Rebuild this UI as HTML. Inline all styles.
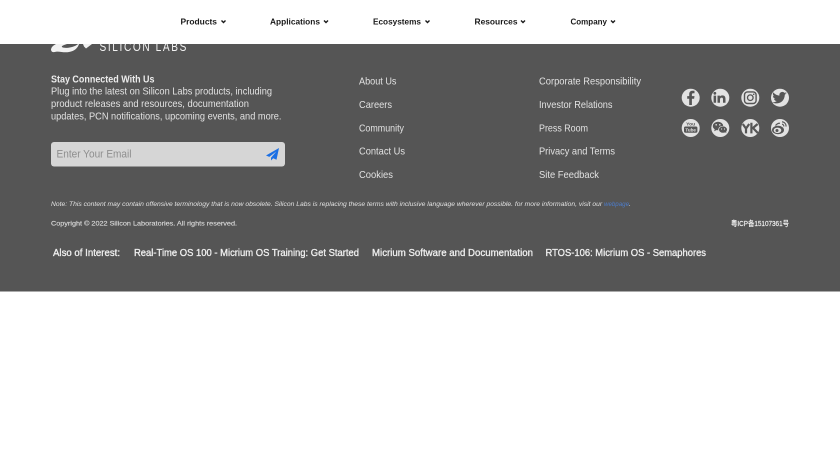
<!DOCTYPE html>
<html lang="en">
<head>
<meta charset="utf-8">
<title>Silicon Labs Footer</title>
<style>
html,body{margin:0;padding:0;background:#fff;width:840px;height:472px;overflow:hidden}
svg{display:block}
text{font-family:"Liberation Sans","Noto Sans CJK SC",sans-serif;white-space:pre}
.nav{font-size:8.300px;font-weight:bold;fill:#1a1a1a}
.body{font-size:10.500px;fill:#e2e2e2}
.link{font-size:10.500px;fill:#e2e2e2}
.also{font-size:10px;fill:#f0f0f0;stroke:#f0f0f0;stroke-width:.3}
.chev{fill:none;stroke:#1a1a1a;stroke-width:1.400}
.ic{fill:#555}
.is{fill:none;stroke:#555}
</style>
</head>
<body>
<svg width="840" height="472" viewBox="0 0 840 472" xmlns="http://www.w3.org/2000/svg">
<rect width="840" height="472" fill="#fff"/>
<rect y="44" width="840" height="247.500" fill="#555"/>

<!-- nav -->
<text class="nav" x="180.500" y="24.500" textLength="36.500" lengthAdjust="spacingAndGlyphs">Products</text>
<path class="chev" d="M221.500 20.500l2 2 2-2"/>
<text class="nav" x="270" y="24.500" textLength="50" lengthAdjust="spacingAndGlyphs">Applications</text>
<path class="chev" d="M324 20.500l2 2 2-2"/>
<text class="nav" x="373" y="24.500" textLength="48" lengthAdjust="spacingAndGlyphs">Ecosystems</text>
<path class="chev" d="M425.500 20.500l2 2 2-2"/>
<text class="nav" x="474.500" y="24.500" textLength="43" lengthAdjust="spacingAndGlyphs">Resources</text>
<path class="chev" d="M521 20.500l2 2 2-2"/>
<text class="nav" x="570.500" y="24.500" textLength="36.500" lengthAdjust="spacingAndGlyphs">Company</text>
<path class="chev" d="M611 20.500l2 2 2-2"/>

<!-- logo (clipped by the header) -->
<g clip-path="url(#logoclip)">
<path fill="#f2f2f2" d="M51 50c0-2.500 2-4.500 5-6h11c-3 1-6 2-5 3 1 1.200 6 1 9 .2 3-.6 6-2 7-3.200h1c-1 3.500-4 7-10 8-5 1-10-1-13-.2-2 .5-4.500 1-5-2z"/>
<path fill="#f2f2f2" d="M83 44h9l-6 4.500-2-2z"/>
<text x="99.500" y="51" font-size="12.500" fill="#f2f2f2" textLength="88.500" lengthAdjust="spacingAndGlyphs" style="letter-spacing:2px">SILICON LABS</text>
</g>
<defs><clipPath id="logoclip"><rect x="40" y="44" width="160" height="10"/></clipPath></defs>

<!-- newsletter copy -->
<text x="51" y="82.500" font-size="10.300" font-weight="bold" fill="#ececec" textLength="103.500" lengthAdjust="spacingAndGlyphs">Stay Connected With Us</text>
<text class="body" x="51" y="94.700" textLength="221" lengthAdjust="spacingAndGlyphs">Plug into the latest on Silicon Labs products, including</text>
<text class="body" x="51" y="107" textLength="198" lengthAdjust="spacingAndGlyphs">product releases and resources, documentation</text>
<text class="body" x="51" y="119.300" textLength="230.500" lengthAdjust="spacingAndGlyphs">updates, PCN notifications, upcoming events, and more.</text>

<!-- email -->
<rect x="51" y="142" width="234" height="24.500" rx="3" fill="#d6d6d6"/>
<text x="56.500" y="157.700" font-size="11" fill="#8e8e8e" textLength="75" lengthAdjust="spacingAndGlyphs">Enter Your Email</text>
<path fill="#1b6fe4" d="M279 148l-13 7.500 3.300 1.400 7-5.400-5.300 6.200v2.800l2.200-2.200 3.300 1.400z"/>

<!-- links column 1 -->
<text class="link" x="359" y="84.500" textLength="37.500" lengthAdjust="spacingAndGlyphs">About Us</text>
<text class="link" x="359" y="108" textLength="33" lengthAdjust="spacingAndGlyphs">Careers</text>
<text class="link" x="359" y="131.500" textLength="45" lengthAdjust="spacingAndGlyphs">Community</text>
<text class="link" x="359" y="154.500" textLength="46" lengthAdjust="spacingAndGlyphs">Contact Us</text>
<text class="link" x="359" y="178" textLength="34" lengthAdjust="spacingAndGlyphs">Cookies</text>

<!-- links column 2 -->
<text class="link" x="539" y="84.500" textLength="102" lengthAdjust="spacingAndGlyphs">Corporate Responsibility</text>
<text class="link" x="539" y="108" textLength="73.500" lengthAdjust="spacingAndGlyphs">Investor Relations</text>
<text class="link" x="539" y="131.500" textLength="49" lengthAdjust="spacingAndGlyphs">Press Room</text>
<text class="link" x="539" y="154.500" textLength="76" lengthAdjust="spacingAndGlyphs">Privacy and Terms</text>
<text class="link" x="539" y="178" textLength="60" lengthAdjust="spacingAndGlyphs">Site Feedback</text>

<!-- social icons -->
<g fill="#e2e2e2">
<circle cx="690.700" cy="97.700" r="9"/><circle cx="720.300" cy="97.700" r="9"/><circle cx="750.300" cy="97.700" r="9"/><circle cx="780" cy="97.700" r="9"/>
<circle cx="690.700" cy="128" r="9"/><circle cx="720.300" cy="128" r="9"/><circle cx="750.300" cy="128" r="9"/><circle cx="780" cy="128" r="9"/>
</g>
<!-- facebook -->
<path class="ic" d="M689.200 105v-6.300h-2v-2.600h2v-1.900c0-2.400 1.300-3.500 3.300-3.500h2v2.600h-1.400c-1 0-1.200.5-1.200 1.200v1.600h2.600l-.4 2.600h-2.200v6.300z"/>
<!-- linkedin -->
<path class="ic" d="M713.600 95.600h2.500v7.200h-2.500zM714.850 91.900a1.400 1.400 0 1 1 0 2.800 1.400 1.400 0 0 1 0-2.800zM717.500 95.600h2.400v1c.5-.8 1.400-1.200 2.400-1.200 2.300 0 3.200 1.400 3.200 3.600v3.800H723v-3.400c0-1-.3-1.800-1.300-1.800-1.100 0-1.700.8-1.700 1.900v3.300h-2.500z"/>
<!-- instagram -->
<rect class="is" x="744.500" y="91.900" width="11.600" height="11.600" rx="3" stroke-width="1.400"/>
<circle class="is" cx="750.300" cy="97.700" r="2.800" stroke-width="1.300"/>
<circle class="ic" cx="753.700" cy="94.300" r=".8"/>
<!-- twitter -->
<path class="ic" d="M787.500 92.700c-.6.300-1.200.4-1.800.5.600-.4 1.100-1 1.300-1.700-.6.400-1.300.6-2 .8a3.100 3.100 0 0 0-5.300 2.800c-2.600-.1-4.900-1.400-6.400-3.300-.8 1.400-.4 3.200 1 4.100-.5 0-1-.2-1.400-.4 0 1.500 1.100 2.800 2.500 3.100-.5.100-.9.100-1.400.1.400 1.200 1.500 2.100 2.900 2.100-1.300 1-3 1.500-4.600 1.300 4.300 2.700 12.500 1.200 13-7.900.7-.4 1.300-1 1.700-1.600z" transform="translate(1.200 .6) scale(.96) translate(31 3.800)"/>
<!-- youtube -->
<text x="690.700" y="125.400" font-size="4.800" font-weight="bold" fill="#555" text-anchor="middle" textLength="9" lengthAdjust="spacingAndGlyphs">You</text>
<rect class="ic" x="684" y="126.500" width="13.400" height="6.200" rx="1.500"/>
<text x="690.700" y="131.400" font-size="4.500" font-weight="bold" fill="#e2e2e2" text-anchor="middle" textLength="10.500" lengthAdjust="spacingAndGlyphs">Tube</text>
<!-- wechat -->
<ellipse class="ic" cx="718" cy="126" rx="5.200" ry="4.300"/>
<path class="ic" d="M714.800 129l-.6 2.200 2.400-1.200z"/>
<ellipse cx="723" cy="129.600" rx="4.800" ry="3.700" fill="#e2e2e2"/>
<ellipse class="ic" cx="723" cy="129.600" rx="4" ry="3.200"/>
<path class="ic" d="M725 132l1.300 1.300-.2-2z"/>
<circle cx="716.200" cy="124.800" r=".8" fill="#e2e2e2"/><circle cx="719.800" cy="124.800" r=".8" fill="#e2e2e2"/>
<circle cx="721.600" cy="129" r=".6" fill="#e2e2e2"/><circle cx="724.500" cy="129" r=".6" fill="#e2e2e2"/>
<!-- youku -->
<path fill="none" stroke="#555" stroke-width="2.200" d="M742.800 124l3.200 4.600 3.200-4.600M746 128.400v5M751.400 122.800v10.600M757.600 124l-4.600 4 4.800 5"/>
<!-- weibo -->
<ellipse class="ic" cx="778" cy="130" rx="6" ry="4.200"/>
<ellipse cx="777.500" cy="130.300" rx="3.800" ry="2.700" fill="#e2e2e2"/>
<circle class="ic" cx="777" cy="130.500" r="1.500"/>
<path d="M775.500 125.500c1.500-1.700 3.200-2.500 4.500-2.200" fill="none" stroke="#555" stroke-width="1.200"/>
<path d="M782 121.800a4.200 4.200 0 0 1 4 4.800M782 124.200a2 2 0 0 1 1.800 2.300" fill="none" stroke="#555" stroke-width="1.100"/>

<!-- note -->
<text x="51" y="206" font-size="6.800" font-style="italic" fill="#e2e2e2" textLength="553" lengthAdjust="spacingAndGlyphs">Note: This content may contain offensive terminology that is now obsolete. Silicon Labs is replacing these terms with inclusive language wherever possible. for more information, visit our </text>
<text x="604" y="206" font-size="6.800" font-style="italic" fill="#4d7cc9" textLength="25" lengthAdjust="spacingAndGlyphs">webpage</text>
<text x="629" y="206" font-size="6.800" font-style="italic" fill="#e2e2e2">.</text>

<!-- copyright -->
<text x="51" y="225.500" font-size="6.800" fill="#d8d8d8" stroke="#d8d8d8" stroke-width=".15" textLength="186" lengthAdjust="spacingAndGlyphs">Copyright © 2022 Silicon Laboratories. All rights reserved.</text>
<text x="731" y="225.800" font-size="7.300" fill="#f8f8f8" stroke="#f8f8f8" stroke-width=".15" textLength="58" lengthAdjust="spacingAndGlyphs">粤ICP备15107361号</text>

<!-- also of interest -->
<text class="also" x="53" y="256" textLength="67" lengthAdjust="spacingAndGlyphs">Also of Interest:</text>
<text class="also" x="134" y="256" textLength="225" lengthAdjust="spacingAndGlyphs">Real-Time OS 100 - Micrium OS Training: Get Started</text>
<text class="also" x="372" y="256" textLength="161" lengthAdjust="spacingAndGlyphs">Micrium Software and Documentation</text>
<text class="also" x="545.500" y="256" textLength="160.500" lengthAdjust="spacingAndGlyphs">RTOS-106: Micrium OS - Semaphores</text>
</svg>
</body>
</html>
